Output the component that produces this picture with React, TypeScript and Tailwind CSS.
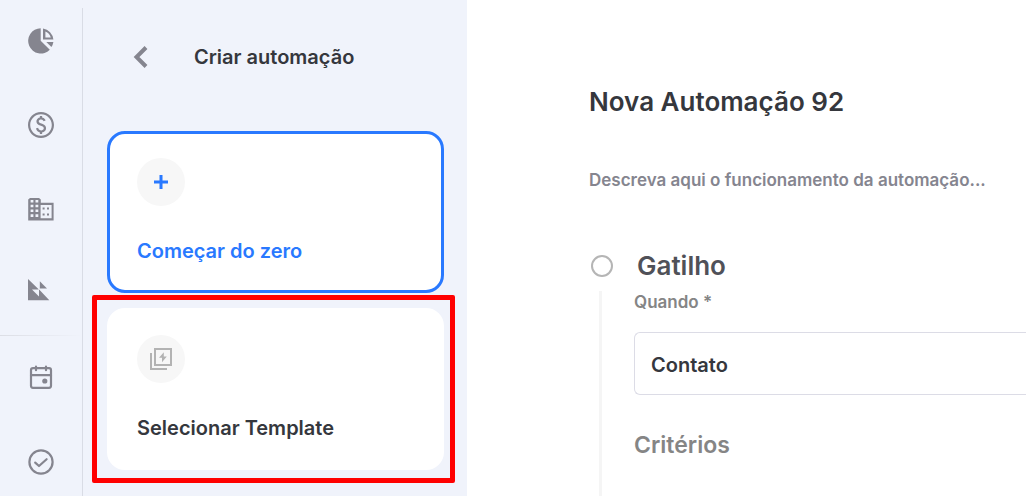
import type { ReactNode } from "react";

function PieIcon() {
  return (
    <svg viewBox="0 0 26 26" className="size-[26px]" fill="currentColor" aria-hidden="true">
      <path d="M12.7 .3A12.6 12.6 0 1 0 21.8 21.7L12.7 12.8z" />
      <path fillRule="evenodd" d="M15 .5A12.6 12.6 0 0 1 25.4 11.6H15zM17.4 3.400v6h5.4A9.500 9.500 0 0 0 17.400 3.400z" />
      <path d="M18.3 14h7.1a12.6 12.6 0 0 1-2 5z" />
    </svg>
  );
}

function MoneyIcon() {
  return (
    <svg viewBox="2 2 20 20" className="size-[26px]" fill="currentColor" aria-hidden="true">
      <path d="M12 2C6.48 2 2 6.48 2 12s4.48 10 10 10 10-4.48 10-10S17.52 2 12 2zm0 18.300c-4.580 0-8.300-3.720-8.300-8.300s3.720-8.300 8.300-8.300 8.300 3.720 8.300 8.300-3.720 8.300-8.300 8.300z" />
      <path d="M12.89 11.1c-1.78-.59-2.64-.96-2.64-1.9 0-1.02 1.11-1.39 1.81-1.39 1.31 0 1.79.99 1.9 1.34l1.58-.67c-.15-.44-.82-1.91-2.66-2.23V5h-1.75v1.26c-2.6.56-2.62 2.85-2.62 2.96 0 2.27 2.25 2.91 3.35 3.31 1.58.56 2.28 1.07 2.28 2.03 0 1.13-1.05 1.61-1.98 1.61-1.82 0-2.34-1.87-2.4-2.09l-1.66.67c.63 2.19 2.28 2.78 3.02 2.96V19h1.75v-1.24c.52-.09 3.02-.59 3.02-3.22.01-1.39-.6-2.61-3-3.44z" />
    </svg>
  );
}

function BuildingIcon() {
  return (
    <svg viewBox="0 0 26 24" className="h-6 w-[26px]" fill="currentColor" aria-hidden="true">
      <path
        fillRule="evenodd"
        d="M2 1H11L12.8 2.6V5.8H25.6V23.400H.2V2.6zM2.600 3V5.600H5.400V3zM7.500 3V5.600H10.300V3zM2.600 7.700V10.300H5.400V7.700zM7.500 7.700V10.300H10.300V7.700zM2.600 12.500V15.100H5.400V12.500zM7.500 12.500V15.100H10.300V12.500zM2.600 17.300V19.900H5.400V17.300zM7.500 17.300V19.900H10.300V17.300zM12.600 8V21.300H23.600V8z"
      />
      <path d="M14.600 10.600h2v2h-2zM19 10.600h2v2h-2zM14.600 16.400h2v2h-2zM19 16.400h2v2h-2z" />
    </svg>
  );
}

function FlagsIcon() {
  return (
    <svg viewBox="0 0 22 22" className="mr-1 size-[22px]" fill="currentColor" aria-hidden="true">
      <path fillRule="evenodd" d="M0 0L10.600 10.200V10.400H4L11 17.600V10.800H11.400L21.300 21.300H0z" />
      <path d="M11.8 2.3V9.6H19z" />
    </svg>
  );
}

function CalendarIcon() {
  return (
    <svg viewBox="0 1 26 26" className="size-[26px]" fill="none" stroke="currentColor" strokeWidth="2.2" strokeLinecap="round" aria-hidden="true">
      <rect x="3" y="4.2" width="20" height="19.6" rx="2" />
      <path d="M3 11.2h20M8 2.6v3.600M18 2.6v3.600" />
      <circle cx="16.8" cy="17" r="2.6" fill="currentColor" stroke="none" />
    </svg>
  );
}

function CheckIcon() {
  return (
    <svg viewBox="0 0 26 26" className="size-[26px]" fill="none" stroke="currentColor" strokeWidth="2.2" strokeLinecap="round" strokeLinejoin="round" aria-hidden="true">
      <circle cx="13" cy="13" r="11.6" />
      <path d="M7.2 13.6l3.800 3.400 7.600-6.800" />
    </svg>
  );
}

function TemplateIcon() {
  return (
    <svg viewBox="0 0 24 24" className="size-6" fill="none" stroke="#b3b3b3" strokeWidth="2" aria-hidden="true">
      <path d="M6 2h16v16H6z" />
      <path d="M2 6v16h16" />
      <path d="M14.8 5.2l-4.8 5.6h3v4.4l4.8-5.6h-3z" fill="#b3b3b3" stroke="none" />
    </svg>
  );
}

function RailLink({ label, children }: { label: string; children: ReactNode }) {
  return (
    <a href="#" aria-label={label} className="flex h-[84px] items-center justify-center">
      {children}
    </a>
  );
}

function OptionCard({ label, icon, active = false }: { label: string; icon: ReactNode; active?: boolean }) {
  return (
    <button
      type="button"
      className={
        active
          ? "flex w-full flex-col items-start gap-7 rounded-[18px] border-3 border-[#2979ff] bg-white px-[27px] py-6 text-left text-[#2979ff]"
          : "flex w-full flex-col items-start gap-7 rounded-[18px] border-3 border-white bg-white px-[27px] py-6 text-left text-[#35373d]"
      }
    >
      <span className="flex size-12 items-center justify-center rounded-full bg-[#f7f7f7]">{icon}</span>
      <span className="pt-0.5 text-[20px] leading-[30px] font-semibold">{label}</span>
    </button>
  );
}

export default function App() {
  return (
    <div className="flex h-screen overflow-hidden bg-white font-['Inter','Liberation_Sans',sans-serif] font-semibold text-[#35373d]">
      <nav aria-label="Principal" className="w-[82px] shrink-0 bg-[#f0f3fb] text-[#85858f]">
        <div className="-mt-px">
          <RailLink label="Painel"><PieIcon /></RailLink>
          <RailLink label="Negócios"><MoneyIcon /></RailLink>
          <RailLink label="Empresas"><BuildingIcon /></RailLink>
        </div>
        <div className="-mt-[3px]"><RailLink label="Relatórios"><FlagsIcon /></RailLink></div>
        <div className="mt-[3px] h-px bg-linear-to-r from-[#dcdee5] to-[#f0f3fb]" />
        <RailLink label="Calendário"><CalendarIcon /></RailLink>
        <RailLink label="Tarefas"><CheckIcon /></RailLink>
      </nav>

      <aside className="flex w-[385px] shrink-0 bg-[#f0f3fb]">
        <div className="mt-2 w-px shrink-0 bg-[#d9dce5]" />
        <div className="flex-1 pr-[23px] pl-6">
          <header className="flex h-[131px] items-start gap-11 pt-[41px] pl-[26px]">
            <button type="button" aria-label="Voltar" className="flex h-8 w-[17px] items-center text-[#85858f]">
              <svg viewBox="0 0 17 24" className="h-6 w-[17px]" fill="none" stroke="currentColor" strokeWidth="4" aria-hidden="true">
                <path d="M13 2.5L3.5 12l9.5 9.5" />
              </svg>
            </button>
            <h2 className="text-[20px] leading-8 font-semibold">Criar automação</h2>
          </header>
          <div className="flex flex-col gap-[15px]">
            <OptionCard
              active
              label="Começar do zero"
              icon={
                <svg viewBox="0 0 14 14" className="size-[14px]" stroke="currentColor" strokeWidth="3" aria-hidden="true">
                  <path d="M7 0v14M0 7h14" />
                </svg>
              }
            />
            <div className="relative">
              <OptionCard label="Selecionar Template" icon={<TemplateIcon />} />
              <div className="pointer-events-none absolute -top-[13px] -right-[11px] -bottom-[13px] -left-[15px] rounded-xs border-5 border-[#ff0000]" />
            </div>
          </div>
        </div>
      </aside>

      <main className="min-w-0 flex-1 pt-[82px] pl-[122px]">
        <h1 className="text-[26px] leading-10 font-semibold">Nova Automação 92</h1>
        <input
          aria-label="Descrição"
          placeholder="Descreva aqui o funcionamento da automação..."
          className="mt-[42px] block h-8 w-full text-[17px] font-semibold outline-none placeholder:text-[#85858f]"
        />
        <section className="mt-[49px] flex gap-[21px] pl-[2px]">
          <div className="flex w-[22px] shrink-0 flex-col gap-[14px] pt-[10px]">
            <span className="size-[22px] shrink-0 rounded-full border-2 border-[#b5b5b5]" />
            <span className="ml-2 h-[260px] w-[3px] bg-[#f5f5f5]" />
          </div>
          <div className="min-w-0 flex-1 pt-px">
            <h2 className="pl-[3px] text-[26px] leading-10 font-semibold text-[#505158]">Gatilho</h2>
            <label htmlFor="trigger" className="block text-[17px] leading-8 text-[#858585]">Quando *</label>
            <select
              id="trigger"
              className="mt-[14px] block h-[63px] w-full appearance-none rounded-l-md border border-r-0 border-[#dcdce6] bg-white px-4 pt-0.5 text-[20px] text-[#35373d]"
            >
              <option>Contato</option>
            </select>
            <h3 className="mt-8 text-[23px] leading-9 font-semibold text-[#858585]">Critérios</h3>
          </div>
        </section>
      </main>
    </div>
  );
}
